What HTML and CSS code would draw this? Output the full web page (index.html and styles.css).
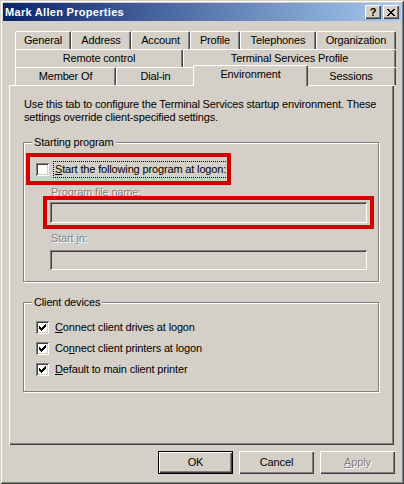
FILE: index.html
```html
<!DOCTYPE html>
<html>
<head>
<meta charset="utf-8">
<link rel="stylesheet" href="styles.css">
</head>
<body>
<div class="window">
  <div class="titlebar">
    <span class="title">Mark Allen Properties</span>
    <div class="tbtns">
      <span class="tbtn help">?</span>
      <span class="tbtn">
        <svg width="8" height="7" viewBox="0 0 8 7" shape-rendering="crispEdges"><path fill="#000" d="M0 0h2v1H0zM6 0h2v1H6zM1 1h2v1H1zM5 1h2v1H5zM2 2h4v1H2zM3 3h2v1H3zM2 4h4v1H2zM1 5h2v1H1zM5 5h2v1H5zM0 6h2v1H0zM6 6h2v1H6z"/></svg>
      </span>
    </div>
  </div>

  <div class="tabs">
    <div class="tabrow">
      <div class="tab w56">General</div>
      <div class="tab w60">Address</div>
      <div class="tab w59">Account</div>
      <div class="tab w50">Profile</div>
      <div class="tab w76">Telephones</div>
      <div class="tab w80">Organization</div>
    </div>
    <div class="tabrow">
      <div class="tab w168">Remote control</div>
      <div class="tab w213">Terminal Services Profile</div>
    </div>
    <div class="tabrow last">
      <div class="tab w101">Member Of</div>
      <div class="tab w79">Dial-in</div>
      <div class="tab sel w111">Environment</div>
      <div class="tab w90">Sessions</div>
    </div>
  </div>

  <div class="panel">
    <p class="desc">Use this tab to configure the Terminal Services startup environment. These<br>settings override client-specified settings.</p>

    <div class="group g1">
      <span class="legend">Starting program</span>
      <div class="cbrow focusrow">
        <span class="cb"></span>
        <span class="cblabel focus"><u>S</u>tart the following program at logon:</span>
      </div>
      <div class="flabel first">Program file name:</div>
      <div class="textbox"></div>
      <div class="flabel second">Start <u>i</u>n:</div>
      <div class="textbox tb2"></div>
      <div class="redbox rb1"></div>
      <div class="redbox rb2"></div>
    </div>

    <div class="group g2">
      <span class="legend">Client devices</span>
      <div class="cbrow">
        <span class="cb"><svg width="7" height="7" viewBox="0 0 7 7" shape-rendering="crispEdges"><path fill="#000" d="M6 0h1v1H6zM5 1h2v1H5zM0 2h1v1H0zM4 2h3v1H4zM0 3h2v1H0zM3 3h3v1H3zM0 4h5v1H0zM1 5h3v1H1zM2 6h1v1H2z"/></svg></span>
        <span class="cblabel"><u>C</u>onnect client drives at logon</span>
      </div>
      <div class="cbrow">
        <span class="cb"><svg width="7" height="7" viewBox="0 0 7 7" shape-rendering="crispEdges"><path fill="#000" d="M6 0h1v1H6zM5 1h2v1H5zM0 2h1v1H0zM4 2h3v1H4zM0 3h2v1H0zM3 3h3v1H3zM0 4h5v1H0zM1 5h3v1H1zM2 6h1v1H2z"/></svg></span>
        <span class="cblabel">Co<u>n</u>nect client printers at logon</span>
      </div>
      <div class="cbrow">
        <span class="cb"><svg width="7" height="7" viewBox="0 0 7 7" shape-rendering="crispEdges"><path fill="#000" d="M6 0h1v1H6zM5 1h2v1H5zM0 2h1v1H0zM4 2h3v1H4zM0 3h2v1H0zM3 3h3v1H3zM0 4h5v1H0zM1 5h3v1H1zM2 6h1v1H2z"/></svg></span>
        <span class="cblabel"><u>D</u>efault to main client printer</span>
      </div>
    </div>
  </div>

  <div class="buttons">
    <div class="btn default">OK</div>
    <div class="btn">Cancel</div>
    <div class="btn disabled"><u>A</u>pply</div>
  </div>
</div>
</body>
</html>
```

FILE: styles.css
```css
html, body {
  margin: 0;
  padding: 0;
  background: #d4d0c8;
}
body {
  font-family: "Liberation Sans", Arial, sans-serif;
  font-size: 11px;
  letter-spacing: -0.15px;
  color: #000;
}
.window {
  width: 404px;
  height: 484px;
  box-sizing: border-box;
  padding: 3px;
  background: #d4d0c8;
  box-shadow: inset 1px 1px 0 #d4d0c8, inset -1px -1px 0 #404040, inset 2px 2px 0 #fff, inset -2px -2px 0 #808080;
  display: flex;
  flex-direction: column;
}
.titlebar {
  height: 18px;
  flex: none;
  background: linear-gradient(to right, #0a246a, #a6caf0);
  display: flex;
  align-items: center;
  justify-content: space-between;
  padding: 0 2px;
  color: #fff;
  font-weight: bold;
  font-size: 11px;
}
.title {
  line-height: 18px;
  letter-spacing: 0.3px;
}
.tbtns {
  display: flex;
  gap: 2px;
}
.tbtn {
  width: 16px;
  height: 14px;
  box-sizing: border-box;
  background: #d4d0c8;
  box-shadow: inset 1px 1px 0 #fff, inset -1px -1px 0 #404040, inset -2px -2px 0 #808080;
  display: flex;
  align-items: center;
  justify-content: center;
  color: #000;
  font-weight: bold;
  font-size: 11px;
  line-height: 14px;
  letter-spacing: 0;
}
.tbtn svg { display: block; }
.tabs {
  margin: 10px 0 0 9px;
  padding-left: 3px;
  width: 381px;
}
.tabrow {
  display: flex;
  height: 18px;
  align-items: flex-end;
}
.tab {
  height: 18px;
  box-sizing: border-box;
  flex: none;
  background: #d4d0c8;
  border-top: 1px solid #fff;
  border-left: 1px solid #fff;
  border-right: 1px solid #404040;
  border-radius: 2px 2px 0 0;
  box-shadow: inset -1px 0 0 #808080;
  text-align: center;
  line-height: 16px;
  white-space: nowrap;
}
.tab.sel {
  height: 21px;
  margin: 0 -2px -1px -2px;
  width: 115px;
  z-index: 1;
  line-height: 16px;
}
.w50 { width: 50px; }
.w56 { width: 56px; }
.w59 { width: 59px; }
.w60 { width: 60px; }
.w76 { width: 76px; }
.w79 { width: 79px; }
.w80 { width: 80px; }
.w90 { width: 90px; }
.w101 { width: 101px; }
.w111 { width: 111px; }
.w168 { width: 168px; }
.w213 { width: 213px; }
.panel {
  margin-left: 6px;
  width: 385px;
  height: 360px;
  box-sizing: border-box;
  flex: none;
  padding: 13px 0 0 14px;
  box-shadow: inset 1px 1px 0 #fff, inset -1px -1px 0 #404040, inset -2px -2px 0 #808080;
  display: flex;
  flex-direction: column;
  align-items: flex-start;
}
.desc {
  margin: 0 0 0 1px;
  line-height: 13px;
  white-space: nowrap;
}
.group {
  width: 356px;
  box-sizing: border-box;
  border: 1px solid #808080;
  box-shadow: inset 1px 1px 0 #fff, 1px 1px 0 #fff;
  padding: 0 0 0 12px;
  display: flex;
  flex-direction: column;
  align-items: flex-start;
}
.g1 {
  margin-top: 18px;
  padding-bottom: 11px;
  position: relative;
}
.g2 {
  margin-top: 20px;
  padding-bottom: 11px;
}
.legend {
  margin: -7px 0 0 -4px;
  padding: 0 2px;
  background: #d4d0c8;
  line-height: 13px;
  height: 13px;
}
.cbrow {
  display: flex;
  align-items: center;
  height: 21px;
}
.g2 .legend + .cbrow {
  margin-top: 8px;
}
.focusrow {
  height: 17px;
  margin-top: 12px;
}
.cb {
  width: 13px;
  height: 13px;
  box-sizing: border-box;
  flex: none;
  background: #fff;
  padding: 3px;
  box-shadow: inset 1px 1px 0 #808080, inset -1px -1px 0 #fff, inset 2px 2px 0 #404040, inset -2px -2px 0 #d4d0c8;
}
.cb svg { display: block; }
.cblabel {
  margin-left: 6px;
  line-height: 13px;
  white-space: nowrap;
}
.cblabel.focus {
  margin-left: 4px;
  border: 1px dotted #000;
  padding: 1px 1px;
}
.flabel {
  margin-left: 15px;
  line-height: 13px;
  color: #808080;
  text-shadow: 1px 1px 0 #fff;
}
.flabel.first { margin-top: 8px; }
.flabel.second { margin-top: 9px; }
.textbox {
  margin: 3px 0 0 14px;
  width: 317px;
  height: 21px;
  box-sizing: border-box;
  background: #d4d0c8;
  box-shadow: inset 1px 1px 0 #808080, inset -1px -1px 0 #fff, inset 2px 2px 0 #404040, inset -2px -2px 0 #d4d0c8;
}
.textbox.tb2 {
  margin-top: 5px;
  height: 20px;
}
.redbox {
  position: absolute;
  box-sizing: border-box;
  border: 4px solid #d40000;
}
.rb1 {
  left: 2px;
  top: 10px;
  width: 205px;
  height: 32px;
}
.rb2 {
  left: 19px;
  top: 53px;
  width: 331px;
  height: 33px;
}
.buttons {
  display: flex;
  justify-content: flex-end;
  gap: 6px;
  margin-top: 6px;
  padding-right: 6px;
}
.btn {
  width: 75px;
  height: 23px;
  box-sizing: border-box;
  background: #d4d0c8;
  box-shadow: inset 1px 1px 0 #fff, inset -1px -1px 0 #404040, inset -2px -2px 0 #808080;
  display: flex;
  align-items: center;
  justify-content: center;
  line-height: 13px;
}
.btn.default {
  border: 1px solid #000;
}
.btn.disabled {
  color: #808080;
  text-shadow: 1px 1px 0 #fff;
}
```
